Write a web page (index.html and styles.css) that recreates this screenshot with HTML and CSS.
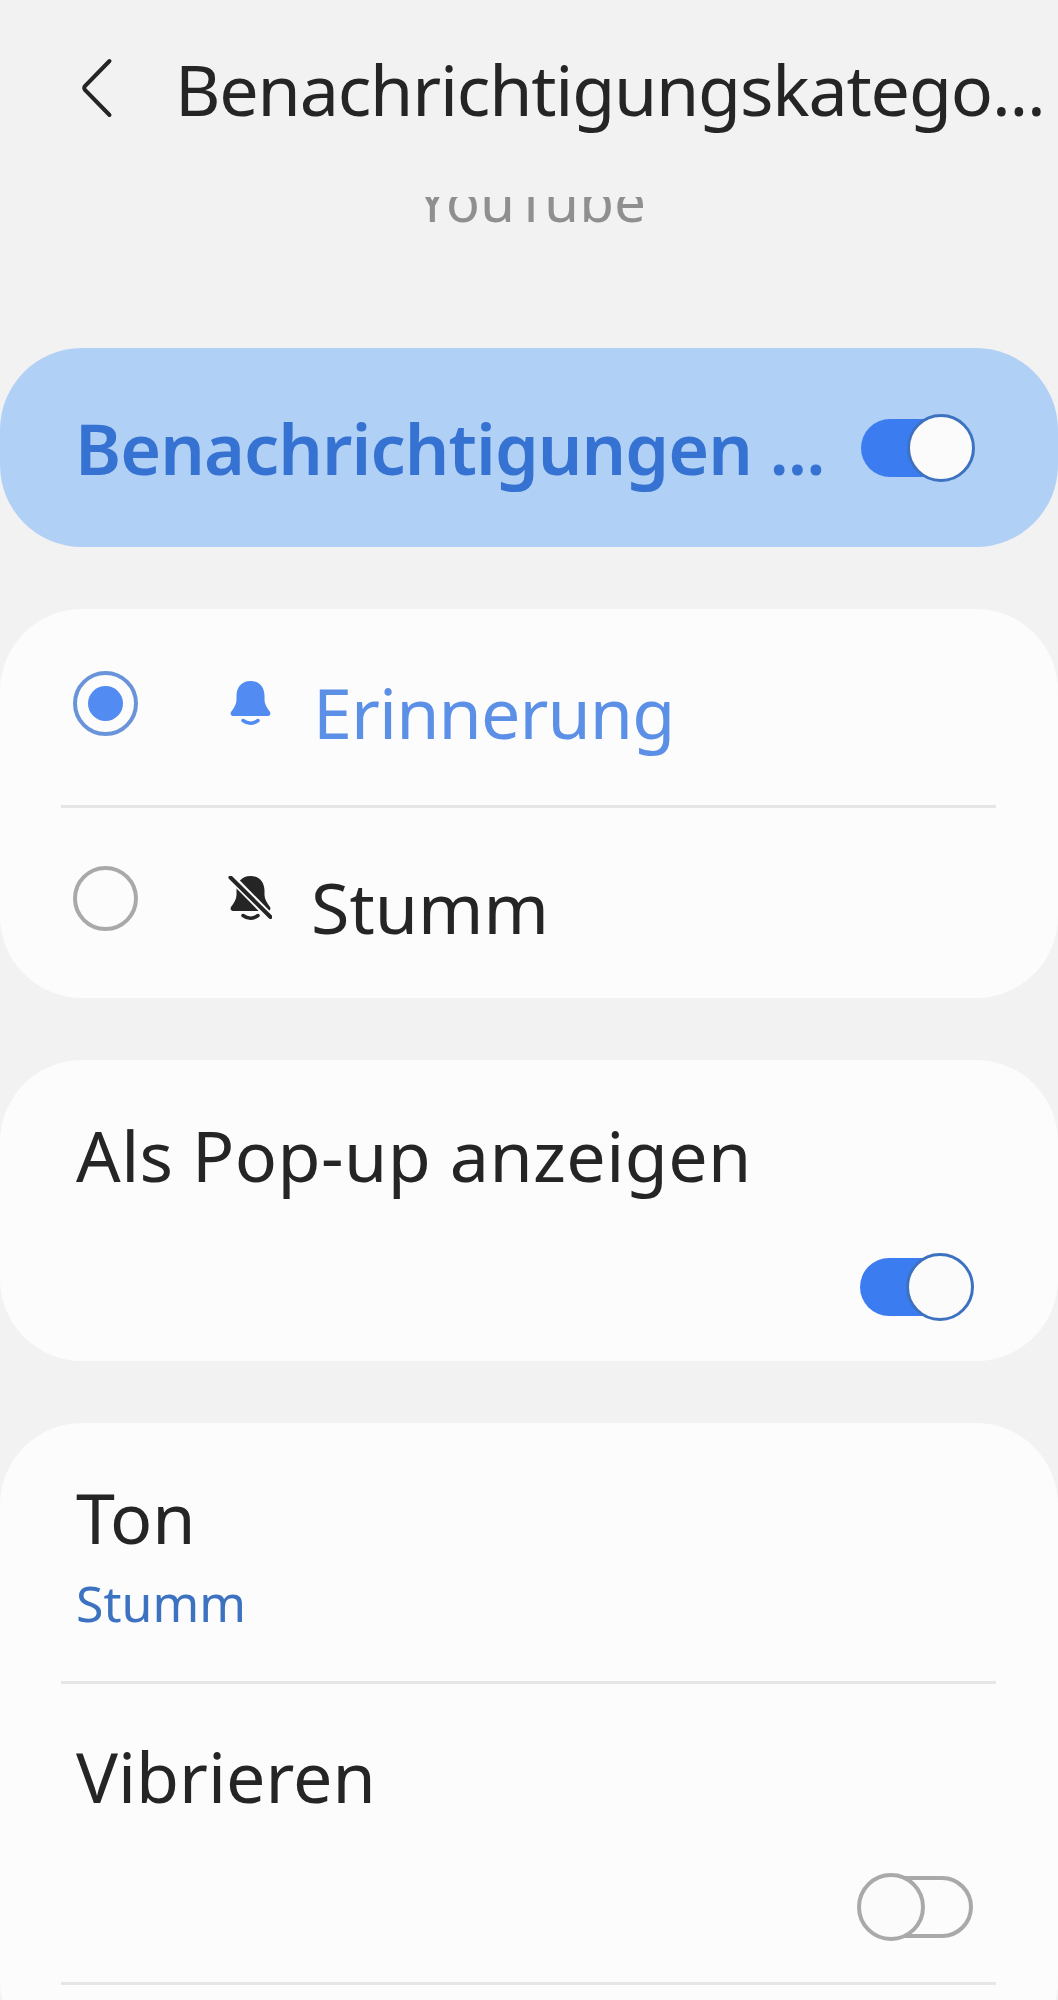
FILE: index.html
```html
<!DOCTYPE html>
<html lang="de">
<head>
<meta charset="utf-8">
<title>Benachrichtigungskategorie</title>
<link rel="stylesheet" href="styles.css">
</head>
<body>
<header class="appbar">
  <svg class="back" viewBox="0 0 32 60" aria-hidden="true"><path d="M28.500 3 L4 28 Q2.500 30 4 32 L28.500 57"/></svg>
  <h1 class="title">Benachrichtigungskatego...</h1>
</header>
<main class="scroll">
  <p class="app-name">YouTube</p>
  <section class="banner">
    <span class="banner-label">Benachrichtigungen ...</span>
    <span class="switch on"><span class="thumb"></span></span>
  </section>
  <section class="card modes">
    <div class="mode mode-first">
      <span class="radio checked"></span>
      <svg class="bell bell-on" viewBox="0 0 41 45" aria-hidden="true"><path class="bell-body" d="M20.500 0C11 0 6.500 7 6.500 15V19C6.500 23 4 27 1 31C0 33 1 35 3 35H38C40 35 41 33 40 31C37 27 34.500 23 34.500 19V15C34.500 7 30 0 20.500 0Z"/><path class="bell-clap" d="M13 39.500Q20.500 45 28 39.500"/></svg>
      <span class="mode-label active">Erinnerung</span>
    </div>
    <div class="rule"></div>
    <div class="mode mode-second">
      <span class="radio"></span>
      <svg class="bell bell-off" viewBox="0 0 44 45" aria-hidden="true"><path class="bell-body" d="M22.500 0C13 0 8.500 7 8.500 15V19C8.500 23 6 27 3 31C2 33 3 35 5 35H40C42 35 43 33 42 31C39 27 36.500 23 36.500 19V15C36.500 7 32 0 22.500 0Z"/><path class="bell-clap" d="M15 39.500Q22.500 45 30 39.500"/><path class="slash-gap" d="M2 0L43 42"/><path class="slash" d="M2.500 1.500L42.500 41"/></svg>
      <span class="mode-label muted">Stumm</span>
    </div>
  </section>
  <section class="card popup">
    <div class="row-title wide">Als Pop-up anzeigen</div>
    <div class="row-switch"><span class="switch on"><span class="thumb"></span></span></div>
  </section>
  <section class="card sound">
    <div class="tone">
      <div class="row-title">Ton</div>
      <div class="row-sub">Stumm</div>
    </div>
    <div class="rule"></div>
    <div class="vibrate">
      <div class="row-title">Vibrieren</div>
      <div class="row-switch"><span class="switch off"><span class="thumb"></span></span></div>
    </div>
    <div class="rule"></div>
  </section>
</main>
</body>
</html>
```
FILE: styles.css
```css
* { box-sizing: border-box; }
html, body { margin: 0; padding: 0; }
body {
  width: 1058px;
  height: 2000px;
  overflow: hidden;
  background: #f2f2f2;
  color: #252525;
  font-family: "Noto Sans", sans-serif;
}
.appbar {
  height: 197px;
  display: flex;
  align-items: flex-start;
  padding: 58px 0 0 81px;
  overflow: hidden;
}
.back {
  width: 32px;
  height: 60px;
  flex: none;
  fill: none;
  stroke: #252525;
  stroke-width: 4;
  stroke-linecap: round;
}
.title {
  margin: -17px 0 0 62px;
  font-size: 70px;
  line-height: 96px;
  font-weight: 400;
  letter-spacing: -1.2px;
  white-space: nowrap;
}
.scroll {
  height: 1803px;
  overflow: hidden;
}
.app-name {
  margin: -35px 0 0;
  height: 186px;
  padding-left: 5px;
  text-align: center;
  font-size: 56px;
  line-height: 76px;
  letter-spacing: 0.5px;
  color: #8f8f8f;
}
.banner {
  height: 199px;
  display: flex;
  align-items: center;
  justify-content: space-between;
  padding: 0 84px 0 75px;
  background: #b0d0f6;
  border-radius: 82px;
  color: #3572d1;
}
.banner-label {
  font-size: 70px;
  font-weight: 600;
  letter-spacing: -0.9px;
  white-space: nowrap;
}
.switch {
  position: relative;
  display: block;
  width: 113px;
  height: 58px;
  border-radius: 29px;
  flex: none;
}
.switch.on { background: #3b7cf0; }
.switch.off { border: 4px solid #a9a9a9; height: 62px; border-radius: 31px; }
.thumb {
  position: absolute;
  top: -5px;
  width: 68px;
  height: 68px;
  border-radius: 50%;
  background: #fbfbfb;
  border: 3px solid #3d72c0;
}
.switch.on .thumb { right: -1px; }
.switch.off .thumb { top: -7px; left: -7px; border-color: #a9a9a9; border-width: 4px; }
.card {
  background: #fcfcfc;
  border-radius: 82px;
  margin-top: 62px;
}
.modes { height: 389px; }
.mode {
  display: flex;
  align-items: center;
  padding-left: 73px;
}
.mode-first { height: 196px; }
.mode-second { height: 190px; }
.rule {
  height: 3px;
  margin: 0 62px 0 61px;
  background: #e6e6e6;
}
.radio {
  width: 65px;
  height: 65px;
  border-radius: 50%;
  border: 4px solid #a9a9a9;
  flex: none;
  margin-top: -10px;
  display: flex;
  align-items: center;
  justify-content: center;
}
.radio.checked { border-color: #6a94d9; margin-top: -8px; }
.radio.checked::after {
  content: "";
  width: 35px;
  height: 35px;
  border-radius: 50%;
  background: #528cf2;
}
.bell { flex: none; margin-top: -10px; }
.bell-on { width: 41px; height: 45px; margin-left: 92px; margin-top: -8px; fill: #528cf2; stroke: #528cf2; }
.bell-off { width: 44px; height: 45px; margin-left: 90px; fill: #252525; stroke: #252525; }
.bell-body { stroke: none; }
.bell-clap { fill: none; stroke-width: 3.500; stroke-linecap: round; }
.slash-gap { fill: none; stroke: #fcfcfc; stroke-width: 8; }
.slash { fill: none; stroke-width: 4; stroke-linecap: round; }
.mode-label {
  font-size: 70px;
  line-height: 96px;
  margin: 10px 0 0 42px;
  letter-spacing: -0.9px;
}
.mode-label.muted { margin-left: 39px; letter-spacing: 0; margin-top: 8px; }
.mode-label.active { color: #5c90e6; }
.popup {
  height: 301px;
  padding: 47px 85px 0 76px;
}
.row-title {
  font-size: 70px;
  line-height: 96px;
  white-space: nowrap;
}
.row-title.wide { letter-spacing: 0.4px; }
.row-switch {
  display: flex;
  justify-content: flex-end;
  margin-top: 55px;
}
.sound { height: 640px; }
.tone { height: 258px; padding: 46px 0 0 76px; }
.row-sub {
  font-size: 50px;
  line-height: 60px;
  margin-top: 8px;
  color: #3d72c0;
}
.vibrate { height: 298px; padding: 44px 85px 0 76px; }
.vibrate .row-switch { margin-top: 52px; }
```
